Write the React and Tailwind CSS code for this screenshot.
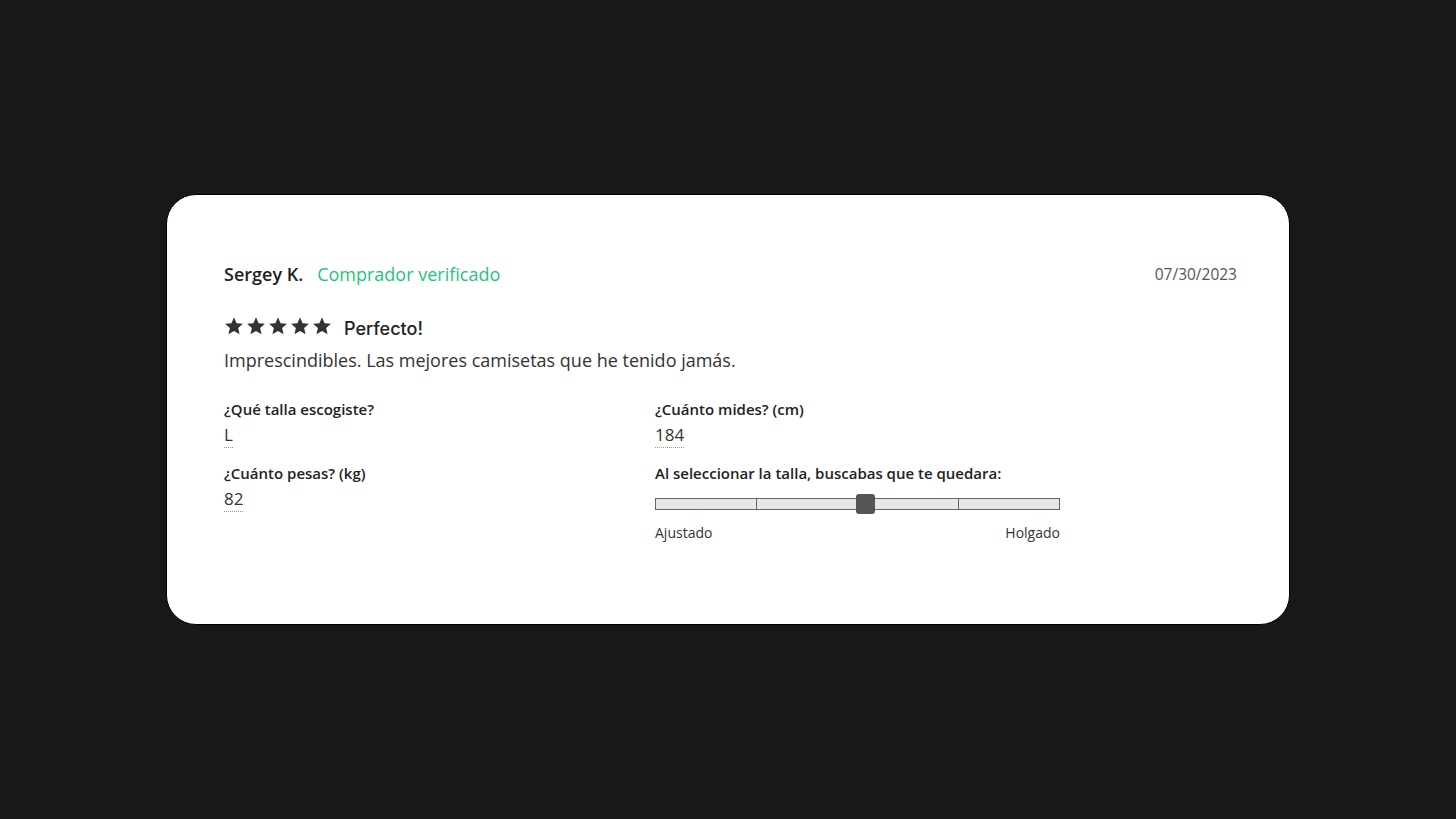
import React from 'react';

const Star = () => (
  <svg width="20" height="20" viewBox="0 0 24 24" className="fill-[#333]">
    <path d="M12 1.5l3.09 7.06 7.66.7-5.8 5.07 1.72 7.5L12 17.9l-6.67 3.93 1.72-7.5-5.8-5.07 7.66-.7z" />
  </svg>
);

function Field({ label, value }) {
  return (
    <div>
      <p className="text-[15px] font-semibold text-[#222] leading-5">{label}</p>
      <p className="mt-[6px] text-[17px] text-[#333] leading-5">
        <span className="border-b border-dotted border-[#999] pb-[1px]">{value}</span>
      </p>
    </div>
  );
}

export default function App() {
  return (
    <div className="min-h-screen bg-[#181818] flex items-center justify-center font-['Open_Sans',sans-serif]">
      <div className="w-[1124px] h-[431px] bg-white rounded-[30px] border border-black pl-[57px] pr-[52px] pt-[66px]">
        {/* Header */}
        <div className="flex items-center justify-between">
          <div className="flex items-baseline gap-[14px]">
            <span className="text-[18px] font-semibold text-[#222]">Sergey K.</span>
            <span className="text-[18px] text-[#1fc37b]">Comprador verificado</span>
          </div>
          <span className="text-[15.5px] text-[#555]">07/30/2023</span>
        </div>

        {/* Rating */}
        <div className="mt-[24px] flex items-center gap-[12px]">
          <div className="flex gap-[2px]">
            <Star /><Star /><Star /><Star /><Star />
          </div>
          <span className="text-[18px] font-medium text-[#222] font-['Inter',sans-serif] translate-y-[3px]">Perfecto!</span>
        </div>
        <p className="mt-[8px] text-[18px] text-[#333]">
          Imprescindibles. Las mejores camisetas que he tenido jamás.
        </p>

        {/* Fields */}
        <div className="mt-[25px] grid grid-cols-[431px_405px]">
          <div className="flex flex-col gap-[18px]">
            <Field label="¿Qué talla escogiste?" value="L" />
            <Field label="¿Cuánto pesas? (kg)" value="82" />
          </div>
          <div className="flex flex-col gap-[18px]">
            <Field label="¿Cuánto mides? (cm)" value="184" />
            <div>
              <p className="text-[15px] font-semibold text-[#222] leading-5">
                Al seleccionar la talla, buscabas que te quedara:
              </p>
              <div className="relative mt-[15px] h-[12px] flex border border-[#666] bg-[#e6e6e6]">
                <div className="flex-1 border-r border-[#666]" />
                <div className="flex-1 border-r border-[#666]" />
                <div className="flex-1 border-r border-[#666]" />
                <div className="flex-1" />
                <div className="absolute left-[200px] top-[-5px] w-[19px] h-[20px] rounded-[3px] bg-[#555]" />
              </div>
              <div className="mt-[12px] flex justify-between text-[14px] text-[#333]">
                <span>Ajustado</span>
                <span>Holgado</span>
              </div>
            </div>
          </div>
        </div>
      </div>
    </div>
  );
}
